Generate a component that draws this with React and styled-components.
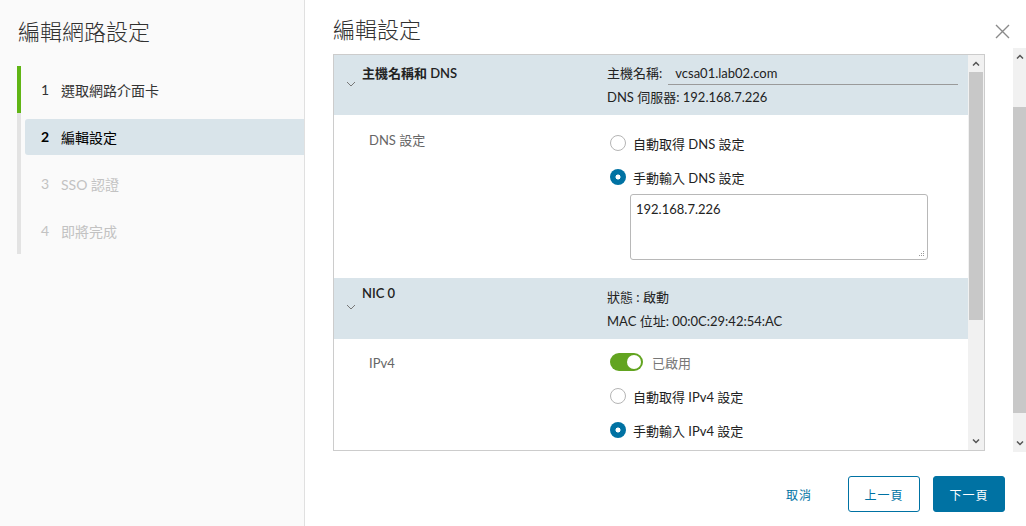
import React from "react"
import styled, { createGlobalStyle, css } from "styled-components"

const GlobalStyle = createGlobalStyle`
	html, body {
		margin: 0;
		padding: 0;
		background: #fff;
	}
	body {
		font-family: Lato, "Noto Sans CJK TC", sans-serif;
		color: #222;
		overflow: hidden;
	}
`

const Page = styled.div`
	display: flex;
	width: 1026px;
	height: 526px;
`

const Sidebar = styled.aside`
	width: 304px;
	flex: none;
	background: #fafafa;
	border-right: 1px solid #e0e0e0;
`

const SideTitle = styled.h1`
	margin: 0;
	padding: 17px 0 0 18px;
	font-size: 22px;
	line-height: 30px;
	font-weight: 300;
	color: #313131;
`

const Steps = styled.ol`
	list-style: none;
	margin: 19px 0 0 17px;
	padding: 0;
`

const Step = styled.li`
	height: 47px;
	box-sizing: border-box;
	padding: 5.5px 0 5.5px 4px;
	border-left: 4px solid ${(p) => (p.$done ? "#60b515" : "#e3e3e3")};
`

const StepInner = styled.div`
	height: 36px;
	display: flex;
	align-items: center;
	padding-left: 16px;
	font-size: 14px;
	border-radius: 3px 0 0 3px;
	color: ${(p) => (p.$state === "disabled" ? "#c2c2c2" : "#333")};
	${(p) =>
		p.$state === "active" &&
		css`
			background: #d9e4ea;
			color: #000;
		`}
`

const StepNum = styled.span`
	width: 20px;
	font-weight: ${(p) => (p.$bold ? 700 : 400)};
`

const Main = styled.main`
	flex: 1;
	display: flex;
`

const MainInner = styled.div`
	flex: 1;
	display: flex;
	flex-direction: column;
	padding: 0 8px 0 28px;
`

const Header = styled.header`
	height: 54px;
	display: flex;
	align-items: flex-start;
	justify-content: space-between;
	padding-top: 16px;
	box-sizing: border-box;
`

const Title = styled.h2`
	margin: 0;
	font-size: 22px;
	line-height: 28px;
	font-weight: 300;
	color: #313131;
`

const CloseBtn = styled.button`
	border: 0;
	background: none;
	padding: 0;
	width: 18px;
	height: 18px;
	display: flex;
	align-items: center;
	justify-content: center;
	margin: 6px -6px 0 0;
	cursor: pointer;
`

const Box = styled.div`
	height: 397px;
	margin-right: 20px;
	border: 1px solid #cccccc;
	box-sizing: border-box;
	display: flex;
	overflow: hidden;
`

const Scroll = styled.div`
	flex: 1;
	overflow: hidden;
`

const SectionHead = styled.div`
	display: grid;
	grid-template-columns: 273px 1fr;
	background: #d9e4ea;
	height: ${(p) => p.$h}px;
	font-size: 13px;
`

const HeadLeft = styled.div`
	display: flex;
	align-items: flex-start;
	padding: ${(p) => p.$top}px 0 0 12px;
	font-weight: 600;
	color: #222;
`

const Chevron = styled.span`
	display: flex;
	margin-top: ${(p) => p.$off}px;
	margin-right: 6px;
`

const HeadRight = styled.div`
	padding-top: ${(p) => p.$top}px;
	line-height: 24px;
	color: #222;
`

const HostRow = styled.div`
	display: flex;
	align-items: center;
`

const HostInput = styled.div`
	margin-left: 6px;
	width: 283px;
	padding-left: 7px;
	line-height: 22px;
	border-bottom: 1px solid #9a9a9a;
`

const Body = styled.div`
	display: grid;
	grid-template-columns: 273px 1fr;
	padding: ${(p) => p.$pad};
	font-size: 13px;
`

const Label = styled.div`
	padding: ${(p) => p.$top}px 0 0 35px;
	line-height: 20px;
	color: #666;
`

const Controls = styled.div`
	padding-left: 3px;
`

const Row = styled.label`
	height: 34px;
	display: flex;
	align-items: center;
	gap: 7px;
	color: ${(p) => (p.$muted ? "#777" : "#222")};
`

const Radio = styled.span`
	width: 16px;
	height: 16px;
	box-sizing: border-box;
	border-radius: 50%;
	flex: none;
	${(p) =>
		p.$on
			? css`
					background: radial-gradient(circle, #fff 0 2.2px, #0072a3 2.8px);
				`
			: css`
					background: #fff;
					border: 1px solid #b5b5b5;
				`}
`

const Toggle = styled.span`
	width: 33px;
	height: 18px;
	border-radius: 9px;
	background: #62a420;
	position: relative;
	flex: none;
	margin-right: 2px;

	&::after {
		content: "";
		position: absolute;
		right: 2px;
		top: 2px;
		width: 14px;
		height: 14px;
		border-radius: 50%;
		background: #fff;
	}
`

const TextArea = styled.div`
	position: relative;
	margin-left: 20px;
	width: 298px;
	height: 66px;
	box-sizing: border-box;
	border: 1px solid #b8b8b8;
	border-radius: 3px;
	padding: 6px 5px;
	line-height: 16px;
	color: #222;
`

const Grip = styled.svg`
	position: absolute;
	right: 2px;
	bottom: 2px;
`

const InnerBar = styled.div`
	width: 16px;
	flex: none;
	background: #f1f1f1;
	display: flex;
	flex-direction: column;
`

const BarArrow = styled.div`
	height: ${(p) => p.$h}px;
	display: flex;
	align-items: center;
	justify-content: center;
	flex: none;
`

const Thumb = styled.div`
	height: ${(p) => p.$h}px;
	background: #c8c8c8;
	flex: none;
	margin: 0 ${(p) => p.$inset || 0}px;
`

const Spacer = styled.div`
	flex: ${(p) => (p.$fixed ? `0 0 ${p.$fixed}px` : 1)};
`

const PageBar = styled.div`
	width: 13px;
	flex: none;
	margin-top: 48px;
	height: 404px;
	background: #f1f1f1;
	display: flex;
	flex-direction: column;
`

const Footer = styled.footer`
	display: flex;
	justify-content: flex-end;
	gap: 13px;
	margin-top: 25px;
`

const Button = styled.button`
	width: 72px;
	height: 36px;
	box-sizing: border-box;
	border-radius: 3px;
	font-family: inherit;
	font-size: 12px;
	letter-spacing: 1px;
	cursor: pointer;
	${(p) =>
		p.$variant === "primary"
			? css`
					background: #0072a3;
					border: 1px solid #0072a3;
					color: #fff;
				`
			: p.$variant === "outline"
			? css`
					background: #fff;
					border: 1px solid #0072a3;
					color: #0072a3;
				`
			: css`
					background: none;
					border: 1px solid transparent;
					color: #0072a3;
				`}
`

function ChevronDown() {
	return (
		<svg width="10" height="6" viewBox="0 0 10 6">
			<path d="M1 1l4 4 4-4" fill="none" stroke="#777" strokeWidth="1" />
		</svg>
	)
}

function Arrow({ up, color = "#555" }) {
	return (
		<svg width="8" height="5" viewBox="0 0 8 5">
			<path d={up ? "M1 4.5L4 1.5 7 4.5" : "M1 0.5L4 3.5 7 0.5"} fill="none" stroke={color} strokeWidth="1.5" />
		</svg>
	)
}

const steps = [
	{ n: 1, text: "選取網路介面卡", state: "done" },
	{ n: 2, text: "編輯設定", state: "active" },
	{ n: 3, text: "SSO 認證", state: "disabled" },
	{ n: 4, text: "即將完成", state: "disabled" },
]

export default function App() {
	return (
		<Page>
			<GlobalStyle />
			<Sidebar>
				<SideTitle>編輯網路設定</SideTitle>
				<Steps>
					{steps.map((s) => (
						<Step key={s.n} $done={s.state === "done"}>
							<StepInner $state={s.state}>
								<StepNum $bold={s.state === "active"}>{s.n}</StepNum>
								{s.text}
							</StepInner>
						</Step>
					))}
				</Steps>
			</Sidebar>
			<Main>
				<MainInner>
					<Header>
						<Title>編輯設定</Title>
						<CloseBtn aria-label="close">
							<svg width="15" height="15" viewBox="0 0 15 15">
								<path d="M1 1l13 13M14 1L1 14" stroke="#8a8a8a" strokeWidth="1.4" />
							</svg>
						</CloseBtn>
					</Header>
					<Box>
						<Scroll>
							<SectionHead $h={60}>
								<HeadLeft $top={8}>
									<Chevron $off={18}>
										<ChevronDown />
									</Chevron>
									主機名稱和 DNS
								</HeadLeft>
								<HeadRight $top={6}>
									<HostRow>
										主機名稱:
										<HostInput>vcsa01.lab02.com</HostInput>
									</HostRow>
									<div>DNS 伺服器: 192.168.7.226</div>
								</HeadRight>
							</SectionHead>
							<Body $pad="11px 0 18px">
								<Label $top={4}>DNS 設定</Label>
								<Controls>
									<Row>
										<Radio />
										自動取得 DNS 設定
									</Row>
									<Row>
										<Radio $on />
										手動輸入 DNS 設定
									</Row>
									<TextArea>
										192.168.7.226
										<Grip width="7" height="7" viewBox="0 0 7 7">
											<g fill="#999">
												<rect x="5" y="1" width="1" height="1" />
												<rect x="3" y="3" width="1" height="1" />
												<rect x="5" y="3" width="1" height="1" />
												<rect x="1" y="5" width="1" height="1" />
												<rect x="3" y="5" width="1" height="1" />
												<rect x="5" y="5" width="1" height="1" />
											</g>
										</Grip>
									</TextArea>
								</Controls>
							</Body>
							<SectionHead $h={61}>
								<HeadLeft $top={7}>
									<Chevron $off={19}>
										<ChevronDown />
									</Chevron>
									NIC 0
								</HeadLeft>
								<HeadRight $top={7}>
									<div>狀態 : 啟動</div>
									<div>MAC 位址: 00:0C:29:42:54:AC</div>
								</HeadRight>
							</SectionHead>
							<Body $pad="6px 0 18px">
								<Label $top={8}>IPv4</Label>
								<Controls>
									<Row $muted>
										<Toggle />
										已啟用
									</Row>
									<Row>
										<Radio />
										自動取得 IPv4 設定
									</Row>
									<Row>
										<Radio $on />
										手動輸入 IPv4 設定
									</Row>
								</Controls>
							</Body>
						</Scroll>
						<InnerBar>
							<BarArrow $h={17}>
								<Arrow up />
							</BarArrow>
							<Thumb $h={248} $inset={1} />
							<Spacer />
							<BarArrow $h={17}>
								<Arrow />
							</BarArrow>
						</InnerBar>
					</Box>
					<Footer>
						<Button>取消</Button>
						<Button $variant="outline">上一頁</Button>
						<Button $variant="primary">下一頁</Button>
					</Footer>
				</MainInner>
				<PageBar>
					<BarArrow $h={17}>
						<Arrow up />
					</BarArrow>
					<Spacer $fixed={42} />
					<Thumb $h={306} />
					<Spacer />
					<BarArrow $h={17}>
						<Arrow />
					</BarArrow>
				</PageBar>
			</Main>
		</Page>
	)
}
